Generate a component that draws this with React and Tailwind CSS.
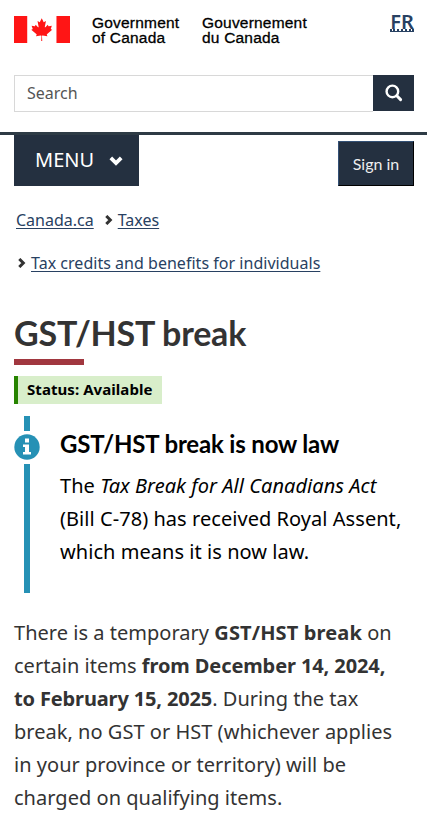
/**
 * Canada.ca – GST/HST break page (mobile layout)
 */
import React from 'react'

function Flag() {
  return (
    <svg width="56" height="27" viewBox="0 0 9956 4800" fill="#ff1515" className="shrink-0">
      <path d="M0 0h2350v4800H0zM7550 0h2406v4800H7550z" />
      <path transform="translate(130 0)" d="m4890 4430-45-863a95 95 0 0 1 111-98l859 151-116-320a65 65 0 0 1 20-73l941-762-212-99a65 65 0 0 1-34-79l186-572-542 115a65 65 0 0 1-73-38l-105-247-423 454a65 65 0 0 1-111-57l204-1052-327 189a65 65 0 0 1-91-27l-332-652-332 652a65 65 0 0 1-91 27l-327-189 204 1052a65 65 0 0 1-111 57l-423-454-105 247a65 65 0 0 1-73 38l-542-115 186 572a65 65 0 0 1-34 79l-212 99 941 762a65 65 0 0 1 20 73l-116 320 859-151a95 95 0 0 1 111 98l-45 863z" />
    </svg>
  )
}

function SearchIcon() {
  return (
    <svg width="18" height="18" viewBox="0 0 18 18" fill="none" stroke="white">
      <circle cx="7.400" cy="7.400" r="5.800" strokeWidth="2.4" />
      <path d="M11.800 11.800l3.800 3.800" strokeWidth="3" strokeLinecap="round" />
    </svg>
  )
}

function InfoIcon() {
  return (
    <svg width="26" height="26" viewBox="0 0 26 26">
      <circle cx="13" cy="13" r="12.7" fill="#2691b5" />
      <path d="M11 4.5h4v4h-4zM9 10.5h6v7.5h2v2.5H9V18h2v-5H9z" fill="white" />
    </svg>
  )
}

function Crumb({ children }) {
  return (
    <a href="#" className="flex items-center text-[#284162]">
      <svg width="8" height="10" viewBox="0 0 8 10" fill="none" stroke="#333" strokeWidth="3" className="mr-[5px]">
        <path d="M1.3 1l4 4-4 4" />
      </svg>
      <span className="underline underline-offset-[2px]">{children}</span>
    </a>
  )
}

export default function App() {
  return (
    <div className="h-[828px] w-[427px] overflow-hidden bg-white font-['Noto_Sans',sans-serif] text-[#333]">
      <header>
        <div className="flex h-[75px] items-start pl-[14px] pr-[13px]">
          <div className="flex pt-4">
            <Flag />
            <div className="-mt-px ml-[22px] w-[110px] whitespace-nowrap font-['Liberation_Sans',sans-serif] text-[15.5px] leading-[15.3px] tracking-[0.2px] text-black [-webkit-text-stroke:0.3px_black]">
              Government<br />of Canada
            </div>
            <div className="-mt-px whitespace-nowrap font-['Liberation_Sans',sans-serif] text-[15.5px] leading-[15.3px] tracking-[0.2px] text-black [-webkit-text-stroke:0.3px_black]">
              Gouvernement<br />du Canada
            </div>
          </div>
          <a href="#" className="ml-auto mt-[11px] flex h-[21px] w-6 justify-center border-b border-[#284162] text-xl font-semibold leading-[21px] text-[#284162]">
            <span className="h-5 border-b-2 border-dotted border-[#284162] leading-[22px]">FR</span>
          </a>
        </div>

        <div className="ml-[14px] flex h-[37px] w-[400px]">
          <div className="flex flex-1 items-center border border-r-0 border-[#d8d8d8] pb-[2px] pl-3 text-base text-[#555]">Search</div>
          <button className="flex h-9 w-[41px] items-center justify-center bg-[#243040]"><SearchIcon /></button>
        </div>

        <div className="mt-5 flex h-[54px] items-start justify-between border-t-[3px] border-[#2e3b45] pl-[14px] pr-[13px]">
          <button className="flex h-[51px] w-[125px] items-center bg-[#243040] pb-[2px] pl-[21px] text-xl text-white">
            MENU
            <svg width="14" height="10" viewBox="0 0 14 10" fill="none" stroke="white" strokeWidth="3.8" className="ml-[15px] mt-[3px]">
              <path d="M1.800 1.900L7 7l5.200-5.100" />
            </svg>
          </button>
          <button className="mt-[6px] h-[45px] w-[76px] border border-b-black border-l-[#335075] border-r-black border-t-[#335075] bg-[#243040] pt-px font-['Lato',sans-serif] text-base text-[#eee]">
            Sign in
          </button>
        </div>
      </header>

      <nav className="pl-4 text-base">
        <div className="mt-[12px] flex h-[43px] items-center">
          <a href="#" className="mr-[11px] text-[#284162] underline underline-offset-[2px]">Canada.ca</a>
          <Crumb>Taxes</Crumb>
        </div>
        <div className="flex h-[43px] items-center pl-[2px] tracking-[0.025px]">
          <Crumb>Tax credits and benefits for individuals</Crumb>
        </div>
      </nav>

      <main className="px-[14px]">
        <h1 className="mt-[26px] h-[49px] font-['Lato',sans-serif] text-[34px] font-bold leading-[46px] tracking-[-0.22px]">GST/HST break</h1>
        <div className="h-[6px] w-[70px] bg-[#a1373f]" />

        <div className="mt-[11px] flex h-7 w-[148px] items-center whitespace-nowrap border-l-4 border-[#278400] bg-[#d8eeca] pb-[2px] pl-[9px] text-[15px] font-bold tracking-[0.06px] text-black">
          Status: Available
        </div>

        <section className="mt-3 flex h-[177px] text-black">
          <div className="flex w-[26px] flex-col items-center">
            <div className="h-[15px] w-[6px] bg-[#2691b5]" />
            <div className="mb-1 mt-[3px] h-[26px]"><InfoIcon /></div>
            <div className="w-[6px] flex-1 bg-[#2691b5]" />
          </div>
          <div className="ml-5 whitespace-nowrap">
            <h2 className="mt-[12px] h-[41px] font-['Lato',sans-serif] text-2xl font-bold leading-[32px] tracking-[-0.17px]">GST/HST break is now law</h2>
            <p className="text-xl leading-[33px] tracking-[0.05px]">
              The <i>Tax Break for All Canadians Act</i><br />
              (Bill C-78) has received Royal Assent,<br />
              which means it is now law.
            </p>
          </div>
        </section>

        <p className="mt-[23px] whitespace-nowrap text-xl leading-[33px] tracking-[0.025px]">
          There is a temporary <b className="tracking-[0.13px]">GST/HST break</b> on<br />
          certain items <b className="tracking-[-0.1px]">from December 14, 2024,</b><br />
          <b className="tracking-[-0.14px]">to February 15, 2025</b>. During the tax<br />
          break, no GST or HST (whichever applies<br />
          in your province or territory) will be<br />
          charged on qualifying items.
        </p>
      </main>
    </div>
  )
}
